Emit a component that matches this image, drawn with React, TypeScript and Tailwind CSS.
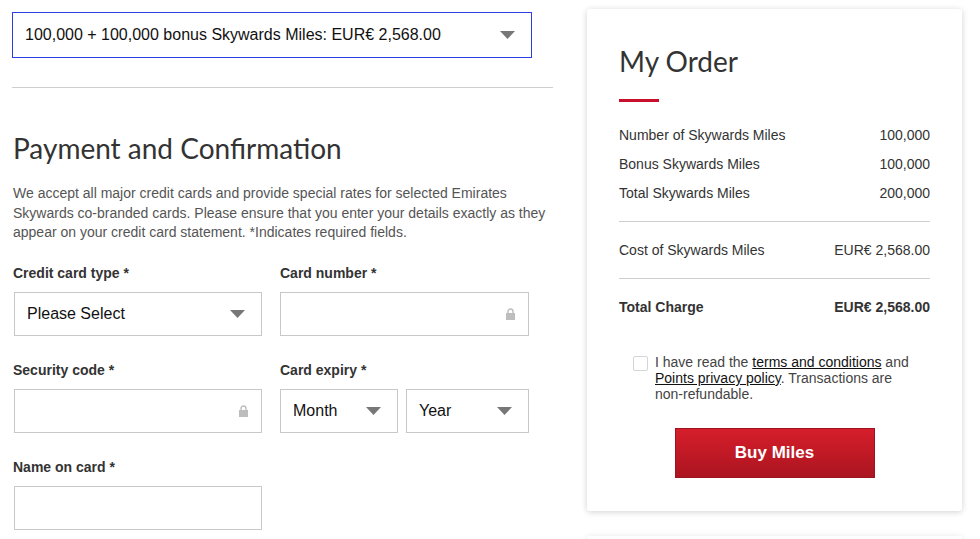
const arial = { fontFamily: '"Liberation Sans", Arial, sans-serif' }
const display = { fontFamily: 'Lato, "Open Sans", sans-serif' }

function Caret() {
  return (
    <svg width="15" height="8" viewBox="0 0 15 8" className="shrink-0">
      <path d="M0 0 L15 0 L7.5 8 Z" fill="#777" />
    </svg>
  )
}

function Padlock() {
  return (
    <svg width="9" height="12" viewBox="0 0 9 12" className="shrink-0">
      <path d="M2 5.5 V3.5 A2.5 2.5 0 0 1 7 3.5 V5.5" fill="none" stroke="#bdbdbd" strokeWidth="1.4" />
      <rect x="0" y="5" width="9" height="7" fill="#bdbdbd" />
    </svg>
  )
}

function SelectBox({ label, className = '' }: { label: string; className?: string }) {
  return (
    <div className={`h-[44px] border border-[#c8c8c8] bg-white flex items-center justify-between pl-3 pr-4 text-[16px] text-[#111] ${className}`}>
      <span>{label}</span>
      <Caret />
    </div>
  )
}

function SecureInput() {
  return (
    <div className="h-[44px] border border-[#c8c8c8] bg-white flex items-center justify-end pr-[13px]">
      <Padlock />
    </div>
  )
}

function Field({ label, children }: { label: string; children: React.ReactNode }) {
  return (
    <div>
      <div className="text-[14px] font-bold text-[#333] leading-5 mb-[9px]">{label}</div>
      {children}
    </div>
  )
}

function Row({ label, value, bold = false }: { label: string; value: string; bold?: boolean }) {
  return (
    <div className={`flex justify-between text-[14px] leading-5 text-[#333] ${bold ? 'font-bold' : ''}`}>
      <span>{label}</span>
      <span>{value}</span>
    </div>
  )
}

export default function App() {
  return (
    <div className="w-[980px] h-[539px] overflow-hidden bg-white flex" style={arial}>
      {/* Left column */}
      <div className="w-[541px] ml-[12px] pt-[12px]">
        <div className="w-[520px] h-[46px] border border-[#2b3fe0] flex items-center justify-between pl-3 pr-4 text-[16px] text-[#111]">
          <span>100,000 + 100,000 bonus Skywards Miles: EUR€ 2,568.00</span>
          <Caret />
        </div>
        <div className="h-px bg-[#cfcfcf] mt-[29px]" />

        <h1 className="text-[28px] text-[#333] leading-none mt-[46px] ml-px" style={display}>
          Payment and Confirmation
        </h1>
        <p className="text-[14px] leading-[19.5px] text-[#555] mt-[22px] ml-px w-[535px]">
          We accept all major credit cards and provide special rates for selected Emirates Skywards co-branded cards.
          Please ensure that you enter your details exactly as they appear on your credit card statement. *Indicates
          required fields.
        </p>

        <div className="grid grid-cols-[249px_249px] gap-x-[18px] gap-y-[24px] mt-[20px] ml-px">
          <Field label="Credit card type *">
            <SelectBox label="Please Select" className="ml-px" />
          </Field>
          <Field label="Card number *">
            <SecureInput />
          </Field>
          <Field label="Security code *">
            <div className="ml-px">
              <SecureInput />
            </div>
          </Field>
          <Field label="Card expiry *">
            <div className="flex gap-[8px]">
              <SelectBox label="Month" className="w-[118px]" />
              <SelectBox label="Year" className="flex-1" />
            </div>
          </Field>
          <Field label="Name on card *">
            <div className="h-[44px] border border-[#c8c8c8] ml-px" />
          </Field>
        </div>
      </div>

      {/* Right column: order summary */}
      <div className="ml-[34px] pt-[9px]">
        <div className="w-[375px] h-[502px] bg-white rounded-[3px] shadow-[0_1px_6px_rgba(0,0,0,0.18)] px-[32px] pt-[38px]">
          <h2 className="text-[28px] text-[#333] leading-none" style={display}>
            My Order
          </h2>
          <div className="w-[40px] h-[3px] bg-[#c8102e] mt-[24px]" />

          <div className="flex flex-col gap-[9px] mt-[23px]">
            <Row label="Number of Skywards Miles" value="100,000" />
            <Row label="Bonus Skywards Miles" value="100,000" />
            <Row label="Total Skywards Miles" value="200,000" />
          </div>
          <div className="h-px bg-[#cfcfcf] mt-[18px]" />
          <div className="py-[18px]">
            <Row label="Cost of Skywards Miles" value="EUR€ 2,568.00" />
          </div>
          <div className="h-px bg-[#cfcfcf]" />
          <div className="pt-[18px]">
            <Row label="Total Charge" value="EUR€ 2,568.00" bold />
          </div>

          <div className="flex gap-[7px] mt-[37px] pl-[14px]">
            <div className="w-[15px] h-[15px] border border-[#d5d5d5] rounded-[2px] mt-[2px] shrink-0" />
            <p className="text-[14px] leading-[16px] text-[#444] w-[258px]">
              I have read the <span className="underline text-[#111]">terms and conditions</span> and{' '}
              <span className="underline text-[#111]">Points privacy policy</span>. Transactions are{' '}
              <span className="whitespace-nowrap">non-refundable.</span>
            </p>
          </div>

          <div className="flex justify-center mt-[26px]">
            <button className="w-[200px] h-[50px] bg-gradient-to-b from-[#d61e2b] to-[#ab1520] border border-[#9c1420] text-white font-bold text-[17px]">
              Buy Miles
            </button>
          </div>
        </div>
        <div className="w-[375px] h-[10px] mt-[25px] bg-white shadow-[0_1px_6px_rgba(0,0,0,0.12)]" />
      </div>
    </div>
  )
}
